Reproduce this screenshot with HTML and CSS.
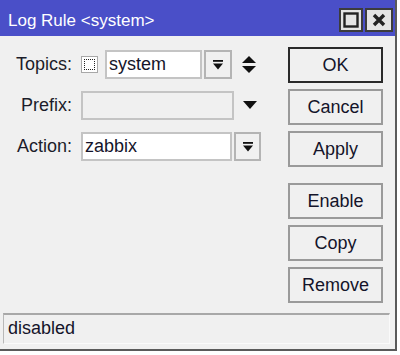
FILE: index.html
```html
<!DOCTYPE html>
<html>
<head>
<meta charset="utf-8">
<link rel="stylesheet" href="styles.css">
</head>
<body>
<div class="window">
  <div class="titlebar">
    <span class="title">Log Rule &lt;system&gt;</span>
    <div class="tb-btns">
      <div class="tb-btn"><svg width="16" height="16" viewBox="0 0 16 16"><rect x="1.5" y="1.5" width="13" height="13" fill="none" stroke="#222" stroke-width="2.4"/></svg></div>
      <div class="tb-btn"><svg width="16" height="16" viewBox="0 0 16 16"><path d="M3 3L13 13M13 3L3 13" stroke="#222" stroke-width="3.4"/></svg></div>
    </div>
  </div>
  <div class="body">
    <div class="form">
      <div class="row">
        <span class="label">Topics:</span>
        <div class="fields">
          <div class="check"><div class="check-inner"></div></div>
          <div class="input topics">system</div>
          <div class="ddbtn"><svg width="12" height="12" viewBox="0 0 12 12"><rect x="1" y="1" width="10" height="1.8" fill="#111"/><path d="M1 4.5H11L6 10.5Z" fill="#111"/></svg></div>
          <svg class="updown" width="16" height="20" viewBox="0 0 16 20"><path d="M8 1L15 8H1Z" fill="#111"/><path d="M1 11H15L8 18Z" fill="#111"/></svg>
        </div>
      </div>
      <div class="row">
        <span class="label">Prefix:</span>
        <div class="fields">
          <div class="input prefix disabled"></div>
          <svg class="tri" width="14" height="9" viewBox="0 0 14 9"><path d="M0 0H14L7 8Z" fill="#111"/></svg>
        </div>
      </div>
      <div class="row">
        <span class="label">Action:</span>
        <div class="fields">
          <div class="input action">zabbix</div>
          <div class="ddbtn small"><svg width="12" height="12" viewBox="0 0 12 12"><rect x="1" y="1" width="10" height="1.8" fill="#111"/><path d="M1 4.5H11L6 10.5Z" fill="#111"/></svg></div>
        </div>
      </div>
    </div>
    <div class="actions">
      <div class="btn default">OK</div>
      <div class="btn">Cancel</div>
      <div class="btn">Apply</div>
      <div class="btn sep">Enable</div>
      <div class="btn">Copy</div>
      <div class="btn">Remove</div>
    </div>
  </div>
  <div class="status">disabled</div>
</div>
</body>
</html>
```
FILE: styles.css
```css
html, body {
  margin: 0;
  padding: 0;
  background: #ffffff;
}
body {
  font-family: "Liberation Sans", Arial, sans-serif;
  font-size: 18px;
  color: #1c1c2a;
}
.window {
  width: 395px;
  height: 349px;
  background: #f0f0f0;
  border-right: 2px solid #5a5a5a;
  border-bottom: 2px solid #5a5a5a;
  display: flex;
  flex-direction: column;
}
.titlebar {
  height: 36px;
  flex: none;
  background: #4a4fc8;
  display: flex;
  align-items: center;
  justify-content: space-between;
  padding-left: 8px;
  padding-right: 2px;
}
.title {
  color: #ffffff;
  font-size: 17px;
  padding-top: 5px;
}
.tb-btns {
  display: flex;
  gap: 2px;
  padding-top: 4px;
}
.tb-btn {
  width: 20px;
  height: 20px;
  background: #e4e4e4;
  border: 2px solid #3c3c3c;
  display: flex;
  align-items: center;
  justify-content: center;
}
.tb-btn + .tb-btn {
  width: 24px;
}
.body {
  flex: 1;
  display: flex;
  justify-content: space-between;
}
.form {
  padding-top: 14px;
  display: flex;
  flex-direction: column;
  gap: 12px;
}
.row {
  display: flex;
  align-items: center;
  height: 29px;
}
.label {
  width: 72px;
  text-align: right;
  margin-right: 9px;
}
.fields {
  display: flex;
  align-items: center;
  height: 29px;
}
.check {
  width: 15px;
  height: 15px;
  border: 1px solid #a8a8a8;
  background: #fff;
  display: flex;
  align-items: center;
  justify-content: center;
  margin-right: 7px;
}
.check-inner {
  width: 9px;
  height: 9px;
  border: 1px dotted #222;
}
.input {
  height: 25px;
  background: #ffffff;
  border: 2px solid #c4c4c4;
  box-sizing: content-box;
  padding-left: 2px;
  line-height: 25px;
  color: #14142a;
}
.topics {
  width: 91px;
}
.prefix {
  width: 147px;
}
.action {
  width: 145px;
}
.disabled {
  background: #f0f0f0;
}
.ddbtn {
  width: 24px;
  height: 25px;
  border: 2px solid #b4b4b4;
  background: #f0f0f0;
  margin-left: 2px;
  display: flex;
  align-items: center;
  justify-content: center;
}
.ddbtn.small {
  width: 23px;
  margin-left: 2px;
}
.updown {
  margin-left: 9px;
}
.tri {
  margin-left: 9px;
}
.actions {
  width: 95px;
  margin-right: 12px;
  padding-top: 11px;
  display: flex;
  flex-direction: column;
  gap: 6px;
}
.btn {
  height: 32px;
  border: 2px solid #9a9a9a;
  background: #f0f0f0;
  display: flex;
  align-items: center;
  justify-content: center;
  color: #14142a;
}
.btn.default {
  border-color: #2a2a2a;
}
.btn.sep {
  margin-top: 10px;
}
.status {
  flex: none;
  height: 28px;
  margin: 0 5px 5px 3px;
  border-top: 2px solid #a8a8a8;
  border-left: 1px solid #b8b8b8;
  border-right: 1px solid #fafafa;
  border-bottom: 1px solid #fafafa;
  padding-left: 4px;
  line-height: 27px;
  color: #14142a;
}
```
